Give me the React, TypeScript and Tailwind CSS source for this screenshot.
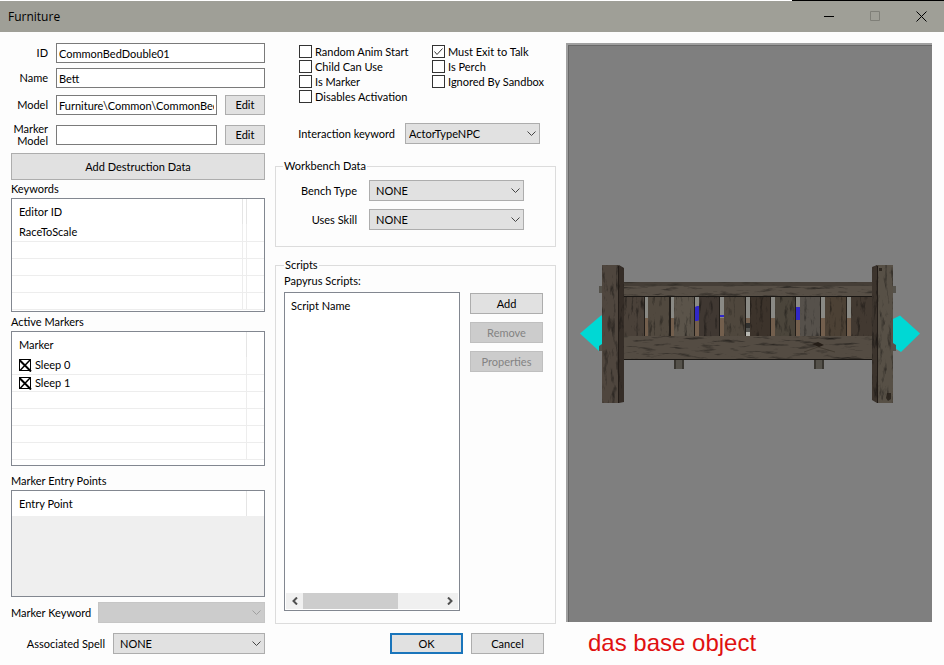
import { ReactNode, useState } from "react";

interface ComboProps {
  id: string;
  value: string;
  className?: string;
  pad?: string;
  disabled?: boolean;
}

function Combo({ id, value, className = "", pad = "pl-[6px]", disabled }: ComboProps) {
  return (
    <div className={`relative h-[21px] ${className}`}>
      <select
        id={id}
        disabled={disabled}
        className={`block h-full w-full appearance-none border border-[#adadad] bg-[#e1e1e1] text-black disabled:border-[#c6c6c6] disabled:bg-[#cccccc] ${pad}`}
      >
        <option>{value}</option>
      </select>
      <svg
        className={`pointer-events-none absolute right-1 top-2 ${disabled ? "text-[#a0a0a0]" : "text-[#444444]"}`}
        width="9"
        height="6"
        viewBox="0 0 9 6"
        fill="none"
        stroke="currentColor"
      >
        <path d="M0.5 0.5 4.5 4.5 8.5 0.5" />
      </svg>
    </div>
  );
}

interface PushButtonProps {
  children: ReactNode;
  className?: string;
  disabled?: boolean;
}

function PushButton({ children, className = "", disabled }: PushButtonProps) {
  return (
    <button
      disabled={disabled}
      className={`border border-[#adadad] bg-[#e1e1e1] text-center disabled:border-[#bfbfbf] disabled:bg-[#cccccc] disabled:text-[#838383] ${className}`}
    >
      {children}
    </button>
  );
}

function Check({ label, initial = false }: { label: string; initial?: boolean }) {
  const [checked, setChecked] = useState(initial);
  return (
    <label className="relative flex h-[15px] items-center gap-[3px] whitespace-nowrap">
      <input
        type="checkbox"
        checked={checked}
        onChange={() => setChecked(!checked)}
        className="size-[13px] shrink-0 appearance-none border border-[#333333] bg-white"
      />
      {checked && (
        <svg className="pointer-events-none absolute left-0 top-px" width="13" height="13" viewBox="0 0 13 13" fill="none" stroke="#333333">
          <path d="M2.5 6.5 5 9.5 10.5 3.5" />
        </svg>
      )}
      {label}
    </label>
  );
}

// marker rows use the old state-image box: a square with a cross that runs over its edges
function MarkerRow({ label }: { label: string }) {
  const [on, setOn] = useState(true);
  return (
    <label className="relative flex items-center gap-1">
      <input
        type="checkbox"
        checked={on}
        onChange={() => setOn(!on)}
        className="size-3 appearance-none border border-black"
      />
      {on && (
        <svg className="pointer-events-none absolute left-0 top-0" width="13" height="13" viewBox="0 0 13 13" fill="none" stroke="#000000">
          <path strokeWidth="2" d="M0 0.5 12 12.5" />
          <path strokeWidth="1.5" d="M11.5 0.5 1 11.5" />
        </svg>
      )}
      {label}
    </label>
  );
}

interface ListViewProps {
  header: string;
  rows: ReactNode[];
  className?: string;
  extraColumn?: boolean;
  empty?: boolean;
}

function ListView({ header, rows, className = "", extraColumn, empty }: ListViewProps) {
  return (
    <div className={`overflow-hidden border border-[#828790] ${empty ? "bg-[#efefef]" : "bg-white"} ${className}`}>
      <table className="w-full table-fixed border-collapse text-left">
        <thead>
          <tr className="h-[25px] bg-white">
            <th className="border-r border-[#e5e5e5] pl-[7px] font-normal">{header}</th>
            {extraColumn && <th className="w-1 border-r border-[#e5e5e5]"></th>}
            <th className="w-[18px]"></th>
          </tr>
        </thead>
        <tbody>
          {rows.map((row, i) => (
            <tr key={i} className="h-[17px] border-b border-[#ededed]">
              <td className="border-r border-[#ededed] pl-[7px]">{row}</td>
              {extraColumn && <td className="border-r border-[#ededed]"></td>}
              <td></td>
            </tr>
          ))}
        </tbody>
      </table>
    </div>
  );
}

const gaps = [645, 671, 695, 720, 746, 771, 796, 821, 847];
const slats = [
  { x: 623, w: 21, fill: "#4a4139" },
  { x: 648, w: 21, fill: "#51493f" },
  { x: 674, w: 20, fill: "#5b544a" },
  { x: 699, w: 20, fill: "#403832" },
  { x: 724, w: 21, fill: "#4f473d" },
  { x: 750, w: 20, fill: "#3c332b" },
  { x: 775, w: 20, fill: "#4b453b" },
  { x: 800, w: 20, fill: "#56514b" },
  { x: 825, w: 21, fill: "#4c4135" },
  { x: 851, w: 24, fill: "#423931" },
];

function BedModel() {
  return (
    <svg width="340" height="140" viewBox="580 264 340 140" role="img" aria-label="CommonBedDouble01">
      <defs>
        <filter id="grain-h" x="0" y="0" width="100%" height="100%" colorInterpolationFilters="sRGB">
          <feTurbulence type="fractalNoise" baseFrequency="0.05 0.3" numOctaves="4" seed="7" />
          <feColorMatrix values="1.5 0 0 0 0.32  1.5 0 0 0 0.32  1.5 0 0 0 0.32  0 0 0 0 1" />
          <feComposite in2="SourceGraphic" operator="arithmetic" k1="1" k2="0" k3="0" k4="0" />
        </filter>
        <filter id="grain-v" x="0" y="0" width="100%" height="100%" colorInterpolationFilters="sRGB">
          <feTurbulence type="fractalNoise" baseFrequency="0.25 0.06" numOctaves="4" seed="3" />
          <feColorMatrix values="1.5 0 0 0 0.3  1.5 0 0 0 0.3  1.5 0 0 0 0.3  0 0 0 0 1" />
          <feComposite in2="SourceGraphic" operator="arithmetic" k1="1" k2="0" k3="0" k4="0" />
        </filter>
      </defs>

      {/* entry markers */}
      <path fill="#00d8d4" d="M580 333.5 601 315.5H603V348L599 351Z" />
      <path fill="#00d8d4" d="M893 319 900 315.5 920 333.5 901 352 893 347Z" />

      {/* pegs and feet */}
      <g fill="#55524b">
        <path d="M599 286h3v7h-3zM599 346l3-2v7h-3zM893 286h3v7h-3zM893 343l3 2v6h-3z" />
        <path d="M674 359h10v10h-10zM814 359h10v10h-10z" />
      </g>
      <path fill="#393630" d="M674 359h2v10h-2zM682 359h2v10h-2zM814 359h2v10h-2zM822 359h2v10h-2z" />

      {/* what shows through between the slats */}
      {gaps.map((x) => (
        <g key={x}>
          <path fill="#211d19" d={`M${x - 2} 297h2v39h-2z`} />
          <path fill="#8a8a85" d={`M${x} 297h4v23h-4z`} />
          <path fill="#735f4d" d={`M${x} 318h4v18h-4z`} />
        </g>
      ))}
      <path fill="#3027c8" d="M695 307l2-1h3v14l-3 1h-2zM720 315h4v2h-4zM796 307h4v13h-4z" />
      <path fill="#30302e" d="M746 323h4v5h-4z" />
      <path fill="#555551" d="M746 328h4v4h-4z" />
      <path fill="#b8b8b2" d="M746 332h4v4h-4z" />

      <g filter="url(#grain-v)">
        {slats.map((s) => (
          <rect key={s.x} x={s.x} y="296" width={s.w} height="41" fill={s.fill} />
        ))}
      </g>

      {/* rails */}
      <g filter="url(#grain-h)">
        <path fill="#574f46" d="M621 282h254v15H621z" />
        <path fill="#544c43" d="M621 336h254v24H621z" />
      </g>
      <path fill="#38332d" d="M621 282h254v4H621z" opacity="0.6" />
      <path fill="#1a1714" d="M621 359h254v1H621zM624 296h250v1H624z" />
      <path fill="#241d17" d="M812 344l6-2 6 3-5 2z" />
      <path fill="none" stroke="#302920" d="M804 352 818 347 835 352" opacity="0.5" />

      {/* posts */}
      <g filter="url(#grain-v)">
        <path fill="#4f463e" d="M602 265h17v138H602z" />
        <path fill="#352d27" d="M619 265l5 3v134l-5 1z" />
        <path fill="#3c342d" d="M877 265l-5 2v133l5 3z" />
        <path fill="#575046" d="M877 265h16v138h-16z" />
      </g>
      <path fill="#211b17" d="M618 266h1v137h-1zM877 266h1v137h-1z" />
      <path fill="#241e18" d="M887 393h4v6l-3 2-2-3zM879 268h3v3h-3z" opacity="0.8" />
    </svg>
  );
}

export default function App() {
  return (
    <div className="flex min-h-screen flex-col bg-[#fdfdfd] font-[Lato,sans-serif] text-[11px] leading-3 text-black">
      <div className="flex h-px">
        <div className="flex-1 bg-white" />
        <div className="w-[152px] bg-black" />
      </div>
      <header className="flex h-[31px] items-center justify-between bg-[#9f9f97] pl-2">
        <h1 className="font-['Open_Sans',sans-serif] text-xs">Furniture</h1>
        <div className="flex h-full">
          <button aria-label="Minimize" className="flex w-[46px] items-center justify-center">
            <svg width="11" height="11" viewBox="0 0 11 11" fill="none" stroke="#000000"><path d="M0 5.5H10" /></svg>
          </button>
          <button aria-label="Maximize" disabled className="flex w-[46px] items-center justify-center">
            <svg width="11" height="11" viewBox="0 0 11 11" fill="none" stroke="#7f7f78"><path d="M0.5 0.5H9.5V9.5H0.5Z" /></svg>
          </button>
          <button aria-label="Close" className="flex w-[46px] items-center justify-center">
            <svg width="11" height="11" viewBox="0 0 11 11" fill="none" stroke="#000000"><path d="M0.5 0.5 10.5 10.5M10.5 0.5 0.5 10.5" /></svg>
          </button>
        </div>
      </header>

      <main className="grid flex-1 grid-cols-[254fr_281fr_366fr] gap-x-[10px] pb-[11px] pl-[11px] pr-3 pt-[11px]">
        {/* left column */}
        <section className="flex min-w-0 flex-col">
          <div className="flex items-center gap-2">
            <label htmlFor="form-id" className="w-[37px] text-right">ID</label>
            <input id="form-id" defaultValue="CommonBedDouble01" className="h-5 min-w-0 flex-1 border border-[#7a7a7a] bg-white px-[2px]" />
          </div>
          <div className="mt-[5px] flex items-center gap-2">
            <label htmlFor="form-name" className="w-[37px] text-right">Name</label>
            <input id="form-name" defaultValue="Bett" className="h-5 min-w-0 flex-1 border border-[#7a7a7a] bg-white px-[2px]" />
          </div>
          <div className="mt-[7px] flex items-center gap-2">
            <label htmlFor="model" className="w-[37px] text-right">Model</label>
            <input id="model" defaultValue="Furniture\Common\CommonBedDouble01.nif" className="h-5 min-w-0 flex-1 border border-[#7a7a7a] bg-white px-[2px]" />
            <PushButton className="h-5 w-10">Edit</PushButton>
          </div>
          <div className="mt-[10px] flex h-5 items-center gap-2">
            <label htmlFor="marker-model" className="w-[37px] text-right">Marker Model</label>
            <input id="marker-model" defaultValue="" className="h-5 min-w-0 flex-1 border border-[#7a7a7a] bg-white px-[2px]" />
            <PushButton className="h-5 w-10">Edit</PushButton>
          </div>
          <PushButton className="mt-2 h-[27px]">Add Destruction Data</PushButton>

          <h2 className="flex h-[18px] items-center">Keywords</h2>
          <ListView
            header="Editor ID"
            extraColumn
            rows={["RaceToScale", "", "", "", ""]}
            className="h-[114px]"
          />

          <h2 className="flex h-[19px] items-center">Active Markers</h2>
          <ListView
            header="Marker"
            rows={[<MarkerRow label="Sleep 0" />, <MarkerRow label="Sleep 1" />, "", "", "", ""]}
            className="h-[135px]"
          />

          <h2 className="flex h-6 items-center pt-[6px]">Marker Entry Points</h2>
          <ListView header="Entry Point" rows={[]} empty className="min-h-[107px] flex-1" />

          <div className="mt-[5px] flex items-center justify-between">
            <label htmlFor="marker-keyword">Marker Keyword</label>
            <Combo id="marker-keyword" value="" disabled className="w-[167px]" />
          </div>
          <div className="mt-[10px] flex items-center justify-end gap-2">
            <label htmlFor="spell">Associated Spell</label>
            <Combo id="spell" value="NONE" className="w-[152px]" />
          </div>
        </section>

        {/* middle column */}
        <section className="flex min-w-0 flex-col">
          <div className="mt-px flex pl-6">
            <div className="w-[133px]">
              <Check label="Random Anim Start" />
              <Check label="Child Can Use" />
              <Check label="Is Marker" />
              <Check label="Disables Activation" />
            </div>
            <div>
              <Check label="Must Exit to Talk" initial />
              <Check label="Is Perch" />
              <Check label="Ignored By Sandbox" />
            </div>
          </div>

          <div className="mt-[19px] flex items-center justify-end gap-[10px] pr-4">
            <label htmlFor="interaction">Interaction keyword</label>
            <Combo id="interaction" value="ActorTypeNPC" pad="pl-[3px]" className="w-[135px]" />
          </div>

          <fieldset className="mt-4 border border-[#dcdcdc] pb-4 pr-[31px]">
            <legend className="ml-[7px] px-px">Workbench Data</legend>
            <div className="mt-2 flex items-center justify-end gap-3">
              <label htmlFor="bench-type">Bench Type</label>
              <Combo id="bench-type" value="NONE" className="w-[155px]" />
            </div>
            <div className="mt-2 flex items-center justify-end gap-3">
              <label htmlFor="uses-skill">Uses Skill</label>
              <Combo id="uses-skill" value="NONE" className="w-[155px]" />
            </div>
          </fieldset>

          <fieldset className="mt-3 flex flex-1 flex-col border border-[#dcdcdc] pb-3 pl-2 pr-3">
            <legend className="px-px">Scripts</legend>
            <h2 className="mt-1">Papyrus Scripts:</h2>
            <div className="mt-[5px] flex flex-1 gap-[10px]">
              <div className="flex min-w-0 flex-1 flex-col justify-between border border-[#828790] bg-white p-px">
                <div className="px-[5px] py-[6px]">Script Name</div>
                <div className="flex h-4 items-stretch bg-[#f0f0f0]">
                  <button aria-label="Scroll left" className="flex w-[17px] items-center justify-center">
                    <svg width="6" height="8" viewBox="0 0 6 8" fill="none" stroke="#505050" strokeWidth="2"><path d="M5 0.5 1.5 4 5 7.5" /></svg>
                  </button>
                  <div className="flex-1">
                    <div className="h-full w-[69%] bg-[#cdcdcd]" />
                  </div>
                  <button aria-label="Scroll right" className="flex w-[17px] items-center justify-center">
                    <svg width="6" height="8" viewBox="0 0 6 8" fill="none" stroke="#505050" strokeWidth="2"><path d="M1 0.5 4.5 4 1 7.5" /></svg>
                  </button>
                </div>
              </div>
              <div className="flex w-[73px] flex-col gap-2 pt-px">
                <PushButton className="h-[21px]">Add</PushButton>
                <PushButton className="h-[21px]" disabled>Remove</PushButton>
                <PushButton className="h-[21px]" disabled>Properties</PushButton>
              </div>
            </div>
          </fieldset>

          <div className="mt-[9px] flex justify-end gap-2 pr-3">
            <button className="h-[21px] w-[73px] border-2 border-[#1a75bb] bg-[#e1e1e1]">OK</button>
            <PushButton className="h-[21px] w-[73px]">Cancel</PushButton>
          </div>
        </section>

        {/* preview */}
        <section className="flex min-w-0 flex-col">
          <div className="flex flex-1 border-l-2 border-t-2 border-[#a0a0a0]">
            <div className="flex flex-1 items-center justify-center border-l border-t border-[#696969] bg-[#7f7f7f] pr-[2px]">
              <BedModel />
            </div>
          </div>
          <p className="h-8 pl-[22px] pt-[9px] font-['Liberation_Sans',sans-serif] text-2xl leading-6 text-[#e01010]">
            das base object
          </p>
        </section>
      </main>
    </div>
  );
}
